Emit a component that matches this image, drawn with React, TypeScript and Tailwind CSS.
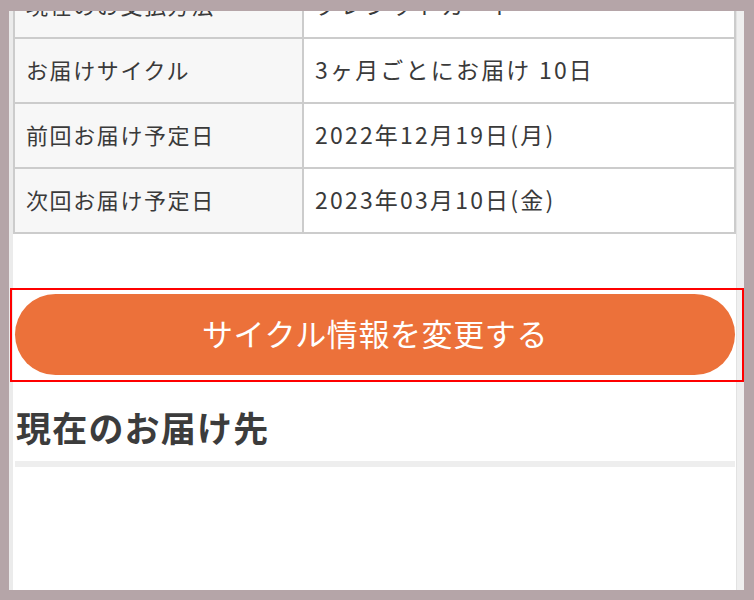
import React from "react";

const rows: [string, string][] = [
  ["現在のお支払方法", "クレジットカード"],
  ["お届けサイクル", "3ヶ月ごとにお届け 10日"],
  ["前回お届け予定日", "2022年12月19日(月)"],
  ["次回お届け予定日", "2023年03月10日(金)"],
];

export default function App() {
  return (
    <div
      className="relative w-[754px] h-[600px] bg-[#b5a5a8] pt-[11px] pl-[9px] pr-[10px] pb-[10px]"
      style={{ fontFamily: '"Noto Sans CJK JP", "Noto Sans", sans-serif' }}
    >
      <div className="flex h-full overflow-hidden bg-white">
        <div className="w-[4px] shrink-0 bg-[#ebebeb]" />
        <div className="flex-1 overflow-hidden">
          <div className="mt-[-39px] border-2 border-[#cccccc]">
            {rows.map(([label, value], i) => (
              <div
                key={label}
                className={`flex ${i < rows.length - 1 ? "h-[65px] border-b-2 border-[#cccccc]" : "h-[63px]"}`}
              >
                <div className="w-[289px] shrink-0 border-r-2 border-[#cccccc] bg-[#f7f7f7] pl-[11px] pb-[3px] flex items-center text-[22px] tracking-[1.6px] text-[#3a3a3a]">
                  {label}
                </div>
                <div className="flex-1 pl-[11px] pb-[3px] flex items-center text-[23px] tracking-[2.2px] text-[#3a3a3a]">
                  {value}
                </div>
              </div>
            ))}
          </div>
          <div className="mt-[60px] ml-[2px] mr-[1px] h-[81px] pb-[3px] rounded-full bg-[#ec713a] flex items-center justify-center text-white text-[31px] tracking-[0.6px]">
            サイクル情報を変更する
          </div>
          <h2 className="mt-[31px] pl-[3px] text-[35px] leading-[42px] font-bold text-[#3c3c3c] tracking-[1.2px]">
            現在のお届け先
          </h2>
          <div className="mt-[13px] ml-[2px] mr-[1px] h-[6px] bg-[#eeeeee]" />
        </div>
        <div className="w-[8px] shrink-0 bg-[#efefef] border-l border-[#e2e2e2]" />
      </div>
      <div className="absolute left-[10px] top-[288px] w-[734px] h-[94px] border-2 border-[#ff0000]" />
    </div>
  );
}
